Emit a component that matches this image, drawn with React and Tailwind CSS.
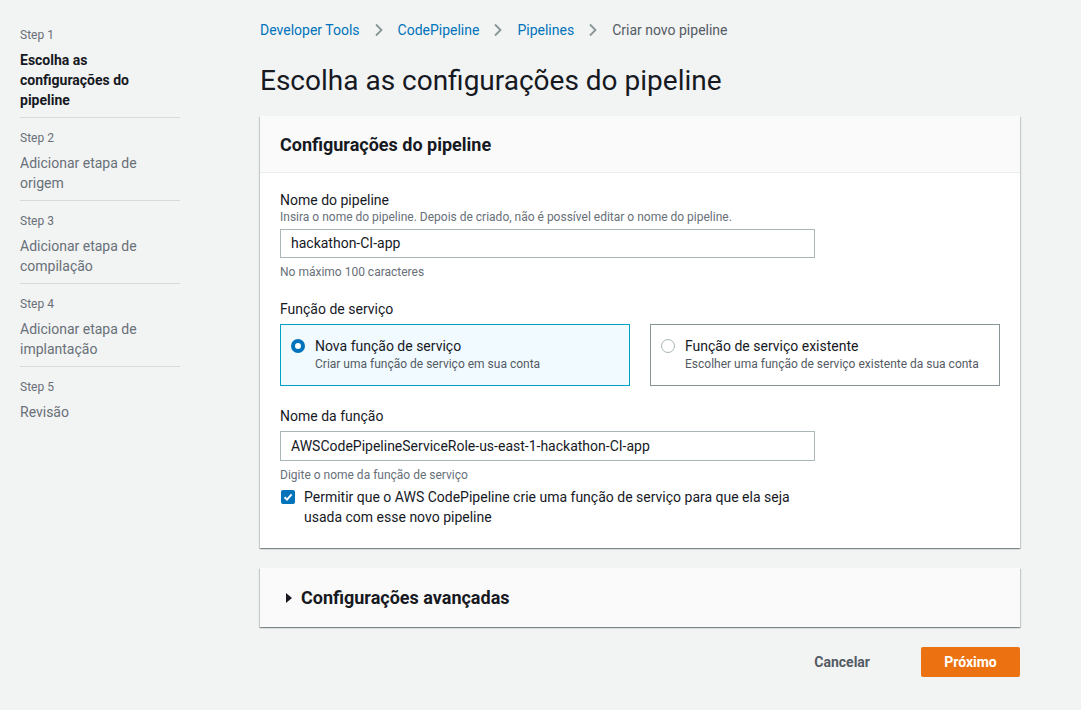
import React from "react";

const steps = [
  { step: "Step 1", title: "Escolha as configurações do pipeline", active: true },
  { step: "Step 2", title: "Adicionar etapa de origem" },
  { step: "Step 3", title: "Adicionar etapa de compilação" },
  { step: "Step 4", title: "Adicionar etapa de implantação" },
  { step: "Step 5", title: "Revisão" },
];

function Chevron() {
  return (
    <svg width="10" height="14" viewBox="0 0 10 14" className="mx-[14px]">
      <path d="M2 1.5 L7.5 7 L2 12.5" fill="none" stroke="#879596" strokeWidth="1.8" />
    </svg>
  );
}

function Sidebar() {
  return (
    <nav className="w-[160px] shrink-0 ml-5 pt-[27px]">
      {steps.map((s, i) => (
        <div key={s.step} className={i < steps.length - 1 ? "border-b border-[#d5dbdb] pb-[7px] mb-[12px]" : ""}>
          <p className="text-[12px] leading-[17px] text-[#687078]">{s.step}</p>
          <p
            className={`mt-[6px] text-[14px] leading-[20px] ${
              s.active ? "font-bold text-[#16191f]" : "text-[#687078]"
            }`}
          >
            {s.title}
          </p>
        </div>
      ))}
    </nav>
  );
}

function Tile({ selected, title, desc }) {
  return (
    <div
      className={`flex-1 h-[62px] border flex items-start px-[10px] pt-[11px] ${
        selected ? "bg-[#f1faff] border-[#00a1c9]" : "bg-white border-[#879596]"
      }`}
    >
      <span
        className={`mt-[3px] w-[14px] h-[14px] rounded-full shrink-0 ${
          selected ? "border-[4px] border-[#0073bb] bg-white" : "border border-[#aab7b8] bg-white"
        }`}
      />
      <div className="ml-[10px]">
        <p className="text-[14px] leading-[20px] text-[#16191f]">{title}</p>
        <p className="text-[12px] leading-[16px] text-[#545b64]">{desc}</p>
      </div>
    </div>
  );
}

export default function App() {
  return (
    <div
      className="min-h-[710px] bg-[#f2f3f3] flex text-[#16191f]"
      style={{ fontFamily: "Roboto, 'Liberation Sans', sans-serif" }}
    >
      <Sidebar />
      <main className="ml-[80px] w-[760px] pt-[20px]">
        <div className="flex items-center text-[14px] leading-[20px]">
          <span className="text-[#0073bb]">Developer Tools</span>
          <Chevron />
          <span className="text-[#0073bb]">CodePipeline</span>
          <Chevron />
          <span className="text-[#0073bb]">Pipelines</span>
          <Chevron />
          <span className="text-[#545b64]">Criar novo pipeline</span>
        </div>
        <h1 className="mt-[23px] text-[28px] leading-[36px] text-[#16191f]">
          Escolha as configurações do pipeline
        </h1>

        <section className="mt-[17px] bg-white shadow-[0_1px_1px_0_rgba(0,28,36,0.3),1px_1px_1px_0_rgba(0,28,36,0.15),-1px_1px_1px_0_rgba(0,28,36,0.15)]">
          <div className="bg-[#fafafa] border-b border-[#eaeded] h-[57px] px-5 pt-[1px] flex items-center">
            <h2 className="text-[18px] font-bold leading-[24px]">Configurações do pipeline</h2>
          </div>
          <div className="px-5 pt-[17px] pb-[21px]">
            <p className="text-[14px] leading-[20px]">Nome do pipeline</p>
            <p className="text-[12px] leading-[14px] text-[#687078]">
              Insira o nome do pipeline. Depois de criado, não é possível editar o nome do pipeline.
            </p>
            <div className="mt-[5px] w-[535px] h-[29px] border border-[#aab7b8] bg-white flex items-center px-[10px] text-[14px]">
              hackathon-CI-app
            </div>
            <p className="mt-[6px] text-[12px] leading-[16px] text-[#687078]">No máximo 100 caracteres</p>

            <p className="mt-[19px] text-[14px] leading-[20px]">Função de serviço</p>
            <div className="mt-[5px] flex gap-5">
              <Tile selected title="Nova função de serviço" desc="Criar uma função de serviço em sua conta" />
              <Tile title="Função de serviço existente" desc="Escolher uma função de serviço existente da sua conta" />
            </div>

            <p className="mt-[20px] text-[14px] leading-[20px]">Nome da função</p>
            <div className="mt-[5px] w-[535px] h-[30px] border border-[#aab7b8] bg-white flex items-center px-[10px] text-[14px]">
              AWSCodePipelineServiceRole-us-east-1-hackathon-CI-app
            </div>
            <p className="mt-[6px] text-[12px] leading-[16px] text-[#687078]">Digite o nome da função de serviço</p>
            <div className="mt-[4px] flex items-start">
              <span className="mt-[3px] ml-[1px] w-[14px] h-[14px] rounded-[2px] bg-[#0073bb] flex items-center justify-center shrink-0">
                <svg width="10" height="10" viewBox="0 0 10 10">
                  <path d="M1.5 5.2 L4 7.6 L8.6 2.4" fill="none" stroke="white" strokeWidth="2" />
                </svg>
              </span>
              <p className="ml-[9px] w-[510px] text-[14px] leading-[20px]">
                Permitir que o AWS CodePipeline crie uma função de serviço para que ela seja usada com esse novo pipeline
              </p>
            </div>
          </div>
        </section>

        <section className="mt-[20px] h-[59px] bg-[#fafafa] flex items-center px-5 shadow-[0_1px_1px_0_rgba(0,28,36,0.3),1px_1px_1px_0_rgba(0,28,36,0.15),-1px_1px_1px_0_rgba(0,28,36,0.15)]">
          <svg width="10" height="12" viewBox="0 0 10 12" className="ml-[4px] mr-[7px]">
            <path d="M2 1 L8 6 L2 11 Z" fill="#16191f" />
          </svg>
          <h2 className="text-[18px] font-bold leading-[24px]">Configurações avançadas</h2>
        </section>

        <div className="mt-[20px] flex justify-end items-center">
          <button className="text-[14px] font-bold text-[#545b64] px-5 h-[30px]">Cancelar</button>
          <button className="ml-[31px] w-[99px] h-[30px] bg-[#ec7211] text-white text-[14px] font-bold rounded-[2px]">
            Próximo
          </button>
        </div>
      </main>
    </div>
  );
}
